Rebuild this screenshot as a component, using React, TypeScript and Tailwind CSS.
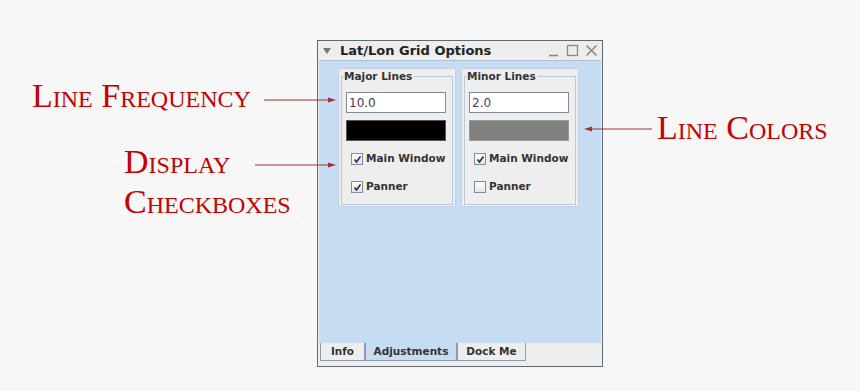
import React from "react";

const ui = { fontFamily: '"DejaVu Sans", "Liberation Sans", sans-serif' };
const serif = { fontFamily: '"Liberation Serif", "Times New Roman", serif', fontVariant: "small-caps" as const };

function Check({ checked }: { checked: boolean }) {
  return (
    <div className="w-[12px] h-[12px] border border-[#7d8ea3] bg-gradient-to-b from-[#ffffff] to-[#dfe6ee] flex items-center justify-center">
      {checked && (
        <svg width="9" height="9" viewBox="0 0 9 9">
          <path d="M1.5 4.5 L3.5 7 L7.5 1.5" stroke="#2a2a3a" strokeWidth="1.6" fill="none" />
        </svg>
      )}
    </div>
  );
}

function Panel({ title, value, swatch, swatchBorder, panner }: { title: string; value: string; swatch: string; swatchBorder: string; panner: boolean }) {
  return (
    <div className="w-[118px] h-[139px] bg-[#eeeeee] border border-[#c3d3e4] px-[2px] pt-[1px]">
      <div className="relative mt-[6px] h-[129px] border border-[#b9cadb]">
        <div className="absolute -top-[8px] left-[2px] bg-[#eeeeee] pr-[2px] text-[10.5px] font-bold text-[#333] leading-[14px]" style={ui}>
          {title}
        </div>
        <div className="pt-[15px] pl-[4px]">
          <div className="w-[100px] h-[21px] bg-white border border-[#7e8c9a] flex items-center pl-[2px] text-[12px] text-[#473b63]" style={ui}>
            {value}
          </div>
          <div className="mt-[7px] w-[100px] h-[21px] border" style={{ background: swatch, borderColor: swatchBorder }} />
          <div className="mt-[11px] pl-[5px] flex items-center gap-[3px] h-[14px]">
            <Check checked={true} />
            <span className="text-[10.5px] font-bold text-[#333]" style={ui}>Main Window</span>
          </div>
          <div className="mt-[14px] pl-[5px] flex items-center gap-[3px] h-[14px]">
            <Check checked={panner} />
            <span className="text-[10.5px] font-bold text-[#333]" style={ui}>Panner</span>
          </div>
        </div>
      </div>
    </div>
  );
}

function Tab({ label, selected, w }: { label: string; selected?: boolean; w: string }) {
  return (
    <div
      className={`${w} h-[18px] border-l border-r border-b border-[#8f9caa] flex items-center justify-center text-[10.5px] font-bold text-[#333] ${selected ? "bg-[#c6dcf2]" : "bg-[#eeeeee]"}`}
      style={ui}
    >
      {label}
    </div>
  );
}

export default function App() {
  return (
    <div className="relative w-[860px] h-[391px] bg-[#f7f7f7] overflow-hidden">
      <div className="pl-[317px] pt-[40px]">
        <div className="w-[286px] h-[327px] border border-[#606870] bg-[#eeeeee] flex flex-col">
          {/* title bar */}
          <div className="h-[19px] flex items-center pl-[4px] pr-[4px] bg-[#ededed]">
            <svg width="10" height="8" viewBox="0 0 10 8" className="mr-[8px]">
              <path d="M1 1 L9 1 L5 7 Z" fill="#777" />
            </svg>
            <span className="text-[13px] font-bold text-[#222]" style={ui}>Lat/Lon Grid Options</span>
            <div className="ml-auto flex items-center gap-[6px]">
              <svg width="12" height="13" viewBox="0 0 12 13"><path d="M1 11.5 L10 11.5" stroke="#888" strokeWidth="1.6" /></svg>
              <svg width="13" height="13" viewBox="0 0 13 13"><rect x="1.5" y="1.5" width="10" height="10" stroke="#888" strokeWidth="1.3" fill="none" /></svg>
              <svg width="13" height="13" viewBox="0 0 13 13"><path d="M1.5 1.5 L11.5 11.5 M11.5 1.5 L1.5 11.5" stroke="#888" strokeWidth="1.5" /></svg>
            </div>
          </div>
          {/* content */}
          <div className="mx-[1px] flex-1 bg-[#c6dcf2] border-t border-[#aebfd0] pl-[19px] pt-[7px]">
            <div className="flex gap-[5px]">
              <Panel title="Major Lines" value="10.0" swatch="#000000" swatchBorder="#555" panner={true} />
              <Panel title="Minor Lines" value="2.0" swatch="#808080" swatchBorder="#999" panner={false} />
            </div>
          </div>
          {/* tabs */}
          <div className="h-[23px] mx-[1px] flex pl-[1px] bg-[#eeeeee]">
            <Tab label="Info" w="w-[45px]" />
            <Tab label="Adjustments" selected w="w-[92px]" />
            <Tab label="Dock Me" w="w-[69px]" />
          </div>
        </div>
      </div>

      {/* annotations */}
      <div className="absolute left-[32px] top-[76px] text-[34px] leading-[40px] text-[#c80000]" style={serif}>Line Frequency</div>
      <svg className="absolute left-[262px] top-[95px]" width="76" height="10" viewBox="0 0 76 10">
        <path d="M2 5 L68 5" stroke="#a83030" strokeWidth="1" />
        <path d="M66 2.5 L74 5 L66 7.5 Z" fill="#a83030" />
      </svg>

      <div className="absolute left-[124px] top-[142px] text-[34px] leading-[40px] text-[#c80000]" style={serif}>
        <div>Display</div>
        <div>Checkboxes</div>
      </div>
      <svg className="absolute left-[253px] top-[160px]" width="85" height="10" viewBox="0 0 85 10">
        <path d="M2 5 L77 5" stroke="#a83030" strokeWidth="1" />
        <path d="M75 2.5 L83 5 L75 7.5 Z" fill="#a83030" />
      </svg>

      <div className="absolute left-[657px] top-[108px] text-[34px] leading-[40px] text-[#c80000]" style={serif}>Line Colors</div>
      <svg className="absolute left-[582px] top-[124px]" width="72" height="10" viewBox="0 0 72 10">
        <path d="M8 5 L70 5" stroke="#a83030" strokeWidth="1" />
        <path d="M10 2.5 L2 5 L10 7.5 Z" fill="#a83030" />
      </svg>
    </div>
  );
}
